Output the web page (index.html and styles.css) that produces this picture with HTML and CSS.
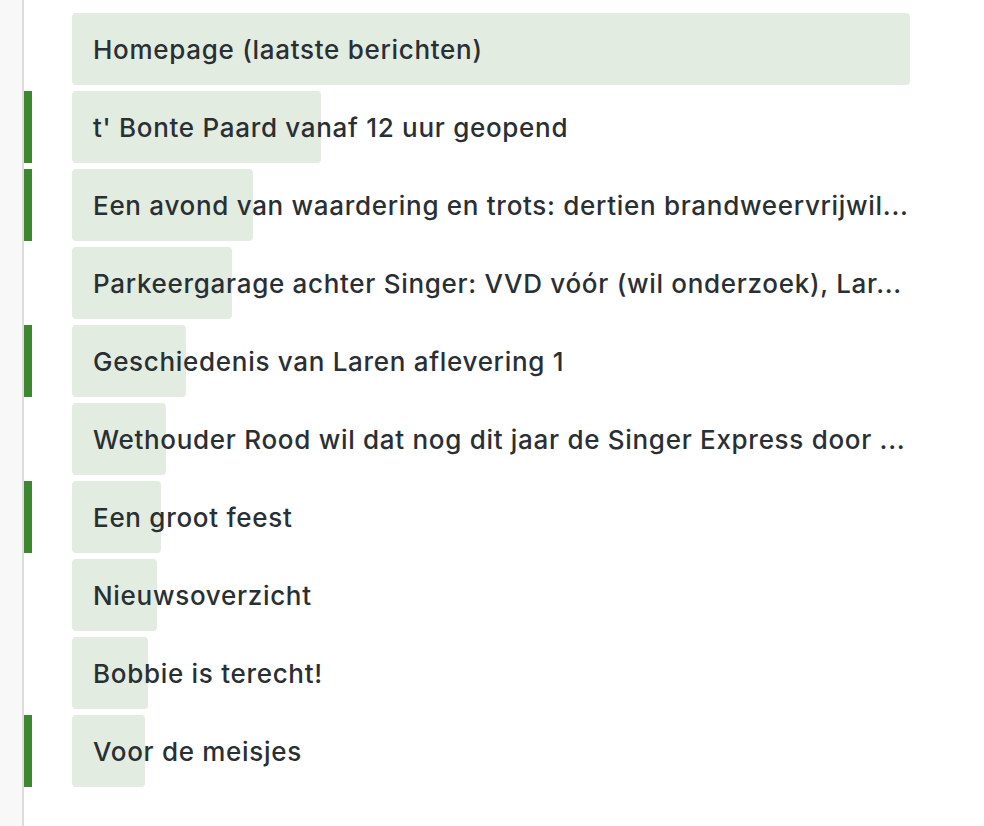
FILE: index.html
```html
<!DOCTYPE html>
<html lang="nl">
<head>
<meta charset="utf-8">
<title>Berichten</title>
<link rel="stylesheet" href="styles.css">
</head>
<body>
<div class="page">
  <aside class="side"></aside>
  <ul class="list">
    <li class="row"><span class="mark"></span><a class="item"><span class="fill" style="width:100%"></span><span class="label">Homepage (laatste berichten)</span></a></li>
    <li class="row"><span class="mark on"></span><a class="item"><span class="fill" style="width:249px"></span><span class="label">t' Bonte Paard vanaf 12 uur geopend</span></a></li>
    <li class="row"><span class="mark on"></span><a class="item"><span class="fill" style="width:181px"></span><span class="label">Een avond van waardering en trots: dertien brandweervrijwil...</span></a></li>
    <li class="row"><span class="mark"></span><a class="item"><span class="fill" style="width:160px"></span><span class="label">Parkeergarage achter Singer: VVD vóór (wil onderzoek), Lar...</span></a></li>
    <li class="row"><span class="mark on"></span><a class="item"><span class="fill" style="width:114px"></span><span class="label">Geschiedenis van Laren aflevering 1</span></a></li>
    <li class="row"><span class="mark"></span><a class="item"><span class="fill" style="width:94px"></span><span class="label">Wethouder Rood wil dat nog dit jaar de Singer Express door ...</span></a></li>
    <li class="row"><span class="mark on"></span><a class="item"><span class="fill" style="width:89px"></span><span class="label">Een groot feest</span></a></li>
    <li class="row"><span class="mark"></span><a class="item"><span class="fill" style="width:85px"></span><span class="label">Nieuwsoverzicht</span></a></li>
    <li class="row"><span class="mark"></span><a class="item"><span class="fill" style="width:76px"></span><span class="label">Bobbie is terecht!</span></a></li>
    <li class="row"><span class="mark on"></span><a class="item"><span class="fill" style="width:73px"></span><span class="label">Voor de meisjes</span></a></li>
  </ul>
</div>
</body>
</html>
```
FILE: styles.css
```css
html, body {
  margin: 0;
  padding: 0;
  background: #ffffff;
}
.page {
  display: flex;
  min-height: 826px;
  font-family: Inter, "Noto Sans", "Liberation Sans", sans-serif;
}
.side {
  width: 22px;
  flex: none;
  background: #f8f8f8;
  border-right: 2px solid #dcdcdc;
}
.list {
  list-style: none;
  margin: 0;
  padding: 13px 0 0 0;
  display: flex;
  flex-direction: column;
  gap: 6px;
}
.row {
  display: flex;
  align-items: stretch;
  gap: 40px;
  height: 72px;
}
.mark {
  width: 8px;
  flex: none;
}
.mark.on {
  background: #3d872e;
}
.item {
  position: relative;
  display: flex;
  align-items: center;
  width: 838px;
  padding: 0 0 0 21px;
  box-sizing: border-box;
  color: #2a2f34;
  text-decoration: none;
  font-size: 26px;
  font-weight: 500;
  letter-spacing: 0.7px;
}
.fill {
  position: absolute;
  left: 0;
  top: 0;
  bottom: 0;
  background: #e2ece0;
  border-radius: 4px;
}
.label {
  position: relative;
  white-space: nowrap;
}
```
